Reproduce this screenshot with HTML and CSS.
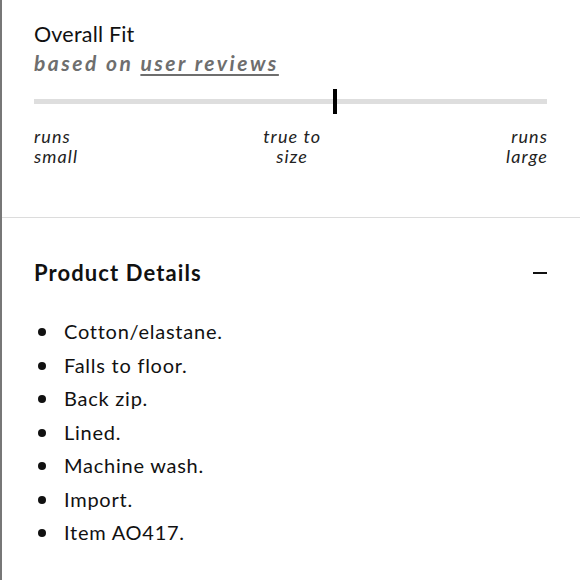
FILE: index.html
```html
<!DOCTYPE html>
<html>
<head>
<meta charset="utf-8">
<link rel="stylesheet" href="styles.css">
</head>
<body>
<div class="panel">
  <section class="fit">
    <h2 class="fit-title">Overall Fit</h2>
    <p class="fit-sub">based on <span class="link">user reviews</span></p>
    <div class="scale">
      <div class="track"></div>
      <div class="marker"></div>
    </div>
    <div class="labels">
      <span class="lbl left">runs<br>small</span>
      <span class="lbl mid">true to<br>size</span>
      <span class="lbl right">runs<br>large</span>
    </div>
  </section>
  <section class="details">
    <div class="details-head">
      <h2 class="details-title">Product Details</h2>
      <span class="minus"></span>
    </div>
    <ul class="list">
      <li>Cotton/elastane.</li>
      <li>Falls to floor.</li>
      <li>Back zip.</li>
      <li>Lined.</li>
      <li>Machine wash.</li>
      <li>Import.</li>
      <li>Item AO417.</li>
    </ul>
  </section>
</div>
</body>
</html>
```

FILE: styles.css
```css
html, body {
  margin: 0;
  padding: 0;
  background: #fff;
}
body {
  font-family: Lato, "Open Sans", Arial, sans-serif;
  color: #111;
  width: 580px;
  height: 580px;
  overflow: hidden;
}
.panel {
  border-left: 2px solid #777;
  height: 580px;
  box-sizing: border-box;
}
.fit {
  padding: 21px 33px 0 32px;
  height: 218px;
  box-sizing: border-box;
  border-bottom: 1px solid #dcdcdc;
}
.fit-title {
  margin: 0;
  font-size: 21.5px;
  font-weight: 400;
  line-height: 26px;
  letter-spacing: 0.2px;
  color: #111;
}
.fit-sub {
  margin: 3px 0 0 0;
  font-size: 21px;
  font-weight: 700;
  font-style: italic;
  letter-spacing: 2.5px;
  line-height: 26px;
  color: #6e6e6e;
}
.link {
  text-decoration: underline;
  text-underline-offset: 3px;
  text-decoration-thickness: 1.5px;
}
.scale {
  position: relative;
  margin-top: 13px;
  height: 25px;
}
.track {
  position: absolute;
  left: 0;
  right: 0;
  top: 10px;
  height: 5px;
  background: #dedede;
}
.marker {
  position: absolute;
  left: 299px;
  top: 0;
  width: 4px;
  height: 25px;
  background: #000;
}
.labels {
  display: flex;
  justify-content: space-between;
  margin-top: 12px;
  font-size: 18px;
  font-style: italic;
  line-height: 20px;
  color: #222;
  letter-spacing: 1.1px;
}
.lbl.mid { text-align: center; }
.lbl.right { text-align: right; margin-right: -1px; }
.details {
  padding: 42px 33px 0 32px;
}
.details-head {
  display: flex;
  justify-content: space-between;
  align-items: center;
  height: 26px;
}
.details-title {
  margin: 0;
  font-size: 22px;
  font-weight: 700;
  line-height: 26px;
  letter-spacing: 1.1px;
  color: #111;
}
.minus {
  width: 14px;
  height: 2px;
  background: #111;
}
.list {
  list-style: none;
  margin: 29px 0 0 0;
  padding: 0;
}
.list li {
  position: relative;
  padding-left: 30px;
  font-size: 20px;
  line-height: 33.5px;
  letter-spacing: 0.75px;
  color: #111;
}
.list li::before {
  content: "";
  position: absolute;
  left: 4px;
  top: 13px;
  width: 8px;
  height: 8px;
  border-radius: 50%;
  background: #111;
}
```
